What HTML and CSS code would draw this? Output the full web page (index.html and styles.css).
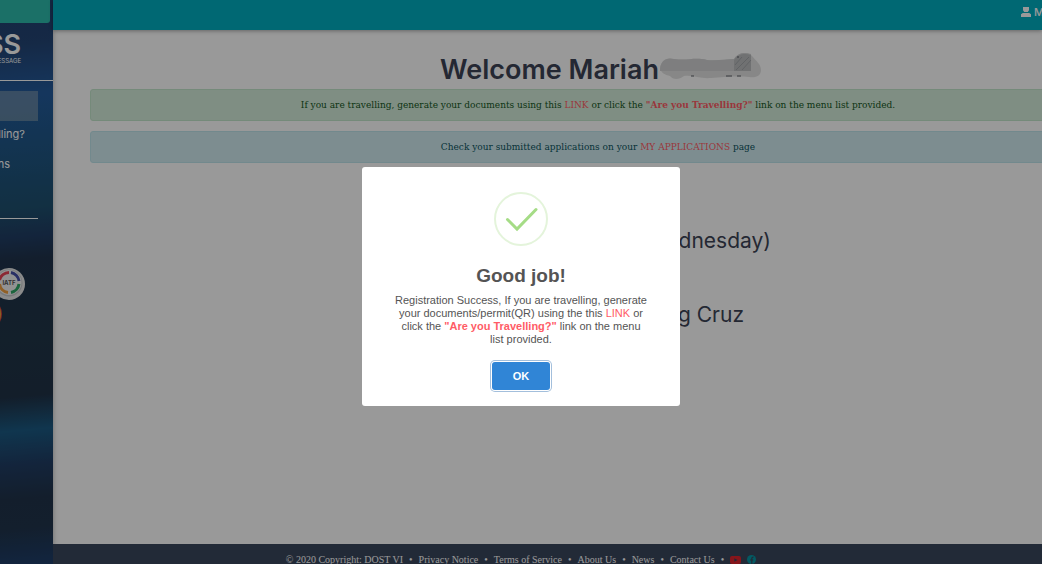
FILE: index.html
```html
<!DOCTYPE html>
<html lang="en">
<head>
  <meta charset="UTF-8" />
  <meta name="viewport" content="width=device-width, initial-scale=1" />
  <title>Dashboard</title>
  <link rel="stylesheet" href="styles.css">
</head>
<body>

<div class="app">
  <aside class="sidebar">
    <div class="sidebar-toggle"></div>
    <div class="brand">
      <span class="brand-name">SS</span>
      <span class="brand-tag">ESSAGE</span>
    </div>
    <nav class="side-nav">
      <a href="#" class="side-link active" aria-label="Dashboard"></a>
      <a href="#" class="side-link">lling?</a>
      <a href="#" class="side-link">ns</a>
    </nav>
    <div class="seals">
      <svg class="seal" width="34" height="34" viewBox="0 0 34 34">
        <circle cx="17" cy="17" r="16" fill="#e8e8e8" />
        <circle cx="17" cy="16" r="13.5" fill="#c6cacc" />
        <circle cx="17" cy="15.5" r="12.5" fill="#f4f4f4" />
        <g fill="none" stroke-width="3">
          <path d="M7.5 13 A10 10 0 0 1 17 5.500" stroke="#e84658" />
          <path d="M19 5.500 A10 10 0 0 1 27 14" stroke="#454fa8" />
          <path d="M27 17 A10 10 0 0 1 19 25.500" stroke="#2fa767" />
          <path d="M16 25.500 A10 10 0 0 1 7.500 17" stroke="#f2a040" />
        </g>
        <text x="17" y="18" class="seal-text">IATF</text>
      </svg>
      <svg class="seal" width="34" height="34" viewBox="0 0 34 34">
        <circle cx="-6" cy="13" r="16" fill="#d9433c" />
        <circle cx="-6" cy="13" r="15" fill="#e9a23a" />
      </svg>
    </div>
  </aside>

  <div class="page">
    <header class="topbar">
      <a href="#" class="user-link">
        <svg width="10" height="10" viewBox="0 0 10 10" fill="currentColor">
          <path d="M2 0h6v3.200L6.800 5H3.200L2 3.200zM0 10V7.200L1.800 6h6.400L10 7.200V10z" />
        </svg>
        <span>Mariah</span>
      </a>
    </header>

    <main class="content">
      <h1 class="welcome">
        Welcome Mariah
        <svg width="102" height="28" viewBox="0 0 102 28">
          <path d="M0 15C1 7 7 4 14 6c14 2 20-2 33 1 10 1 20-1 27-1 4-7 13-8 18-3 4 5 9 8 9 14s-5 8-12 7c-12-1-25 0-38 1-10 1-18-3-27-2-5 4-11 4-14 0-5-1-9-3-10-8z" fill="#e2e2e2" />
          <path d="M0 16C1 7 7 4 14 6c14 2 20-2 33 1 10 1 20-1 27-1 4-6 10-7 17-5v17H0z" fill="#d2d3d4" />
          <path d="M74 18V7c4-6 10-7 17-5v16z" fill="#bbbdbf" />
          <path d="M75 12l7-8M76 17L89 4M82 17l9-10" stroke="#a2a5a9" />
          <path d="M31 23h3M66 23h6M77 23h4M77 4h2" stroke="#5a5e66" />
        </svg>
      </h1>
      <div class="alert alert-success">
        If you are travelling, generate your documents using this <a href="#">LINK</a> or click the <a href="#"><b>"Are you Travelling?"</b></a> link on the menu list provided.
      </div>
      <div class="alert alert-info">
        Check your submitted applications on your <a href="#">MY APPLICATIONS</a> page
      </div>
      <div class="details">
        <h2 class="detail detail-date">dnesday)</h2>
        <h2 class="detail detail-name">g Cruz</h2>
      </div>
    </main>

    <footer class="footer">
      <span>© 2020 Copyright: DOST VI</span>
      <span>•</span>
      <a href="#">Privacy Notice</a>
      <span>•</span>
      <a href="#">Terms of Service</a>
      <span>•</span>
      <a href="#">About Us</a>
      <span>•</span>
      <a href="#">News</a>
      <span>•</span>
      <a href="#">Contact Us</a>
      <span>•</span>
      <a href="#" class="social" aria-label="YouTube">
        <svg width="11" height="8" viewBox="0 0 11 8">
          <rect width="11" height="8" rx="2" fill="#e0232e" />
          <path d="M4.300 2.200v3.600L7.500 4z" fill="#3a465c" />
        </svg>
      </a>
      <a href="#" class="social" aria-label="Facebook">
        <svg width="9" height="9" viewBox="0 0 9 9">
          <circle cx="4.500" cy="4.500" r="4.500" fill="#0596a5" />
          <path d="M4.800 9V3.500Q4.800 2 6.500 2.200M3 5h3.200" fill="none" stroke="#3a465c" stroke-width="1.200" />
        </svg>
      </a>
    </footer>
  </div>
</div>

<!-- Success modal -->
<div class="modal-overlay">
  <div class="modal" role="dialog" aria-labelledby="modal-title">
    <svg class="modal-icon" width="54" height="54" viewBox="0 0 54 54" fill="none">
      <circle cx="27" cy="27" r="26" stroke="#e4f4db" stroke-width="2" />
      <path d="M13.500 27.500L23 37L42 17.500" stroke="#a5dc86" stroke-width="3" stroke-linecap="round" />
    </svg>
    <h2 class="modal-title" id="modal-title">Good job!</h2>
    <p class="modal-text">Registration Success, If you are travelling, generate your documents/permit(QR) using the this <a href="#">LINK</a> or click the <a href="#"><b>"Are you Travelling?"</b></a> link on the menu list provided.</p>
    <button type="button" class="modal-ok">OK</button>
  </div>
</div>

</body>
</html>
```

FILE: styles.css
```css
* {
  box-sizing: border-box;
}
body {
  margin: 0;
  font-family: "DejaVu Serif Condensed", "DejaVu Serif", serif;
  font-size: 10px;
  background: #fff;
  overflow: hidden;
}
a {
  color: #ff5c66;
  text-decoration: none;
}
.app {
  --side: 53px;
  display: flex;
  height: 100vh;
}

/* Sidebar */
.sidebar {
  flex: 0 0 var(--side);
  overflow: hidden;
  color: #fff;
  font-family: Inter, sans-serif;
  background: linear-gradient(175deg, #22406f 0%, #234575 8%, #235b9c 17%, #205787 26%, #1e506f 37%, #213d64 42%, #20334b 46%, #203648 60%, #203247 70%, #1b5a83 76%, #203d64 82%, #20334a 88%, #20344b 93%, #1e3e6b 100%);
  box-shadow: 0 0 5px rgba(0,0,0,0.3);
}
.sidebar-toggle {
  width: 50px;
  height: 23px;
  background: #2dbbac;
  border-radius: 0 0 3px 0;
}
.brand {
  display: flex;
  flex-direction: column;
  align-items: flex-end;
  height: 58px;
  padding: 8px 32px 0 0;
  border-bottom: 1px solid #fff;
}
.brand-name {
  font-size: 27px;
  line-height: 27px;
  font-weight: 600;
}
.brand-tag {
  font-size: 6px;
  line-height: 6px;
}
.side-nav {
  display: flex;
  flex-direction: column;
  height: 128px;
  margin: 10px 15px 0 0;
  border-bottom: 1px solid #fff;
}
.side-link {
  display: flex;
  justify-content: flex-end;
  height: 30px;
  padding-right: 13px;
  font-size: 11px;
  line-height: 26px;
  color: #fff;
}
.side-link:last-child {
  padding-right: 28px;
}
.side-link.active {
  background: rgba(210,205,190,0.35);
}
.seals {
  display: flex;
  flex-direction: column;
  margin: 48px 0 0 -8px;
}
.seal-text {
  font-size: 6px;
  font-weight: 700;
  fill: #555;
  text-anchor: middle;
}

/* Page */
.page {
  flex: 1;
  min-width: 0;
  display: flex;
  flex-direction: column;
}
.topbar {
  display: flex;
  justify-content: flex-end;
  align-items: center;
  height: 30px;
  padding-bottom: 6px;
  background: #00adc0;
  box-shadow: 0 1px 4px rgba(0,0,0,0.35);
}
.user-link {
  display: flex;
  align-items: center;
  gap: 3px;
  width: 21px;
  overflow: hidden;
  color: #fff;
  font: 500 11px Inter, sans-serif;
}
.user-link svg {
  flex: none;
}
.content {
  flex: 1;
  margin-right: -101px;
  padding: 22px 37px 0;
  text-align: center;
}
.welcome {
  display: flex;
  justify-content: center;
  gap: 1px;
  margin: 0 0 2px;
  padding: 1px 0 0 6px;
  font: 600 27px/34px Inter, sans-serif;
  color: #3d4456;
}
.alert {
  height: 32px;
  margin-bottom: 10px;
  border: 1px solid;
  border-radius: 3px;
  line-height: 29px;
}
.alert-success {
  color: #155724;
  background: #d4edda;
  border-color: #c3e6cb;
}
.alert-info {
  color: #0c5460;
  background: #d1ecf1;
  border-color: #bee5eb;
}
.details {
  display: flex;
  flex-direction: column;
  align-items: center;
  gap: 44px;
  padding-top: 53px;
}
.detail {
  margin: 0;
  font: 400 21px/30px Inter, sans-serif;
  color: #3d4456;
  text-align: right;
}
.detail-date {
  width: 346px;
}
.detail-name {
  width: 292px;
}
.footer {
  display: flex;
  justify-content: center;
  gap: 6px;
  height: 20px;
  padding: 9px var(--side) 0 0;
  background: #3a465c;
  color: #fff;
  font-family: "Liberation Serif", serif;
  line-height: 13px;
  white-space: nowrap;
}
.footer a {
  color: #fff;
}
.social {
  padding-top: 1px;
}

/* Modal */
.modal-overlay {
  position: fixed;
  inset: 0;
  display: flex;
  justify-content: center;
  align-items: center;
  padding-top: 9px;
  background: rgba(0,0,0,0.4);
}
.modal {
  display: flex;
  flex-direction: column;
  align-items: center;
  width: 318px;
  max-width: 100%;
  padding: 25px 32px 16px;
  background: #fff;
  border-radius: 3px;
  font-family: "Liberation Sans", Arial, sans-serif;
  color: #545454;
  text-align: center;
}
.modal-title {
  margin: 18px 0 6px;
  font-size: 19px;
  line-height: 24px;
  color: #545454;
}
.modal-text {
  margin: 0 0 16px;
  font-size: 11px;
  line-height: 13px;
}
.modal-ok {
  width: 58px;
  height: 28px;
  border: 0;
  border-radius: 3px;
  background: #3085d6;
  box-shadow: 0 0 0 1px #fff, 0 0 0 2px #a3bfdc;
  color: #fff;
  font: bold 11px "Liberation Sans", Arial, sans-serif;
}
```
